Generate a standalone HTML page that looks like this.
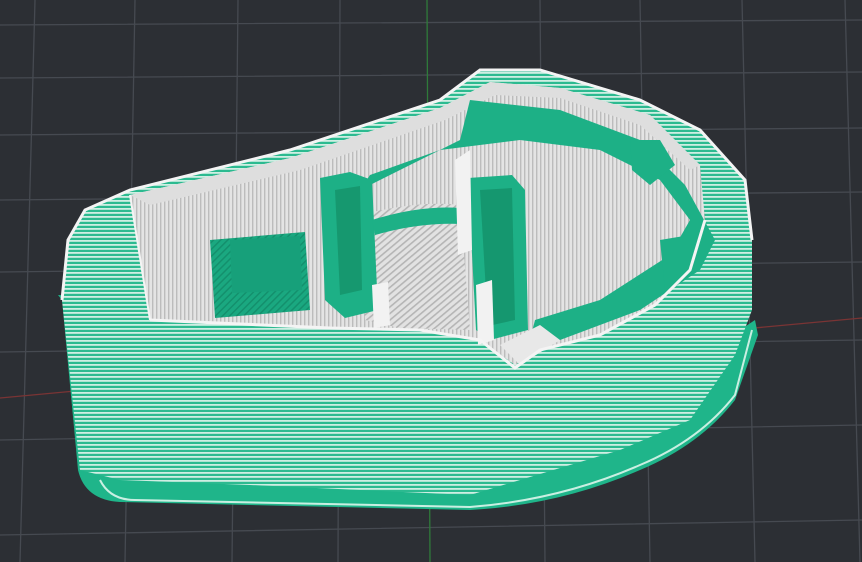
<!DOCTYPE html>
<html><head><style>html,body{margin:0;padding:0;background:#2c2f34;overflow:hidden}svg{display:block}</style></head>
<body>
<svg width="862" height="562" viewBox="0 0 862 562" xmlns="http://www.w3.org/2000/svg">
<defs>
<pattern id="wall" width="4" height="4" patternUnits="userSpaceOnUse">
<rect width="4" height="4" fill="#2cba90"/><rect y="0" width="4" height="1.8" fill="#cfeee3"/>
</pattern>
<pattern id="floor" width="5" height="5" patternUnits="userSpaceOnUse" patternTransform="rotate(50)">
<rect width="5" height="5" fill="#e2e2e2"/><rect width="1.6" height="5" fill="#b5b5b5"/>
</pattern>
<pattern id="floor2" width="4" height="4" patternUnits="userSpaceOnUse">
<rect width="4" height="4" fill="#e4e4e4"/><rect width="1.4" height="4" fill="#bcbcbc"/>
</pattern>
<pattern id="gr" width="5" height="5" patternUnits="userSpaceOnUse" patternTransform="rotate(45)">
<rect width="5" height="5" fill="#1aa880"/><rect width="1.5" height="5" fill="#14906d"/>
</pattern>
</defs>
<g stroke="#464a51" stroke-width="1.3" fill="none">
<path d="M0 25 L862 20 M0 78 L862 72 M0 135 L862 128 M0 200 L862 192 M0 272 L862 262 M0 352 L862 340 M0 440 L862 425 M0 535 L862 520"/>
<path d="M35 0 L20 562 M135 0 L125 562 M238 0 L232 562 M340 0 L338 562 M540 0 L545 562 M640 0 L650 562 M742 0 L755 562 M845 0 L860 562"/>
</g>
<path d="M427 0 L430 562" stroke="#2f7a3a" stroke-width="1.3"/>
<path d="M0 398 L862 318" stroke="#7a3434" stroke-width="1.3"/>
<path d="M58 295 L62 300 L78 470 Q85 500 120 502 L470 510 Q560 505 640 470 Q700 445 735 400 L758 335 L755 320 L740 330 Z" fill="#1fb58a"/>
<path d="M62 300 L68 240 L85 210 L130 190 L290 150 L440 100 L480 70 L540 70 L640 100 L700 130 L745 180 L752 240 L752 310 L735 355 L690 420 L620 450 L470 495 L250 485 L120 480 L80 470 Z" fill="url(#wall)"/>
<path d="M62 300 L68 240 L85 210 L130 190 L290 150 L440 100 L480 70 L540 70 L640 100 L700 130 L745 180 L752 240" fill="none" stroke="#f4f4f4" stroke-width="3"/>
<path d="M130 195 L290 158 L440 108 L490 82 L560 88 L650 115 L700 165 L705 220 L690 270 L655 305 L600 335 L540 350 L515 365 L480 340 L420 330 L330 328 L150 320 Z" fill="url(#floor2)"/>
<path d="M360 215 Q420 200 460 205 L470 330 L400 328 L365 320 Z" fill="url(#floor)"/>
<path d="M530 160 Q620 150 690 210 Q650 270 540 330 Z" fill="url(#floor2)"/>
<path d="M130 195 L290 158 L440 108 L490 82 L560 88 L650 115 L700 165 L690 170 L640 125 L560 98 L495 95 L445 120 L300 170 L150 205 Z" fill="#dedede"/>
<path d="M470 100 L560 110 L640 140 L685 185 L715 240 L700 270 L640 310 L560 340 L530 340 L535 320 L600 300 L670 255 L690 220 L660 180 L600 150 L520 140 L440 150 L370 175 L360 190 L460 140 Z" fill="#1db086"/>
<path d="M210 240 L305 232 L310 310 L215 318 Z" fill="url(#gr)"/>
<path d="M230 240 L300 236 L302 290 L232 293 Z" fill="#17a07a"/>
<path d="M320 178 L350 172 L372 180 L378 310 L345 318 L325 300 Z" fill="#1db086"/>
<path d="M335 190 L360 186 L362 290 L340 295 Z" fill="#16986f"/>
<path d="M468 178 L512 175 L525 190 L528 330 L490 340 L476 330 Z" fill="#1db086"/>
<path d="M480 190 L512 188 L515 320 L488 326 Z" fill="#15976f"/>
<path d="M630 140 L660 140 L675 165 L650 185 L632 170 Z" fill="#1db086"/>
<path d="M660 240 L690 235 L695 270 L665 290 Z" fill="#1db086"/>
<path d="M372 220 Q420 205 462 208 L462 224 Q420 222 375 235 Z" fill="#1db086"/>
<path d="M455 160 L470 150 L472 250 L458 255 Z" fill="#f2f2f2"/>
<path d="M476 285 L492 280 L494 340 L478 345 Z" fill="#f2f2f2"/>
<path d="M372 285 L388 282 L390 325 L374 328 Z" fill="#f2f2f2"/>
<path d="M500 345 L540 325 L560 340 L520 365 Z" fill="#e8e8e8"/>
<path d="M150 320 L330 328 L420 330 L480 340 L515 368 L540 350 L600 335 L655 305 L690 270 L705 220" fill="none" stroke="#f4f4f4" stroke-width="3"/>
<path d="M150 320 L130 195" fill="none" stroke="#f4f4f4" stroke-width="2"/>
<path d="M100 480 Q110 500 135 500 L470 507 Q560 500 640 465 Q700 440 735 395 L752 330" fill="none" stroke="#c9efe2" stroke-width="2"/>
</svg>
</body></html>
